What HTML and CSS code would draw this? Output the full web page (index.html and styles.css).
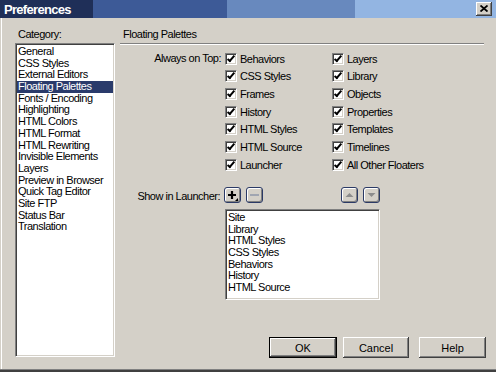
FILE: index.html
```html
<!DOCTYPE html>
<html>
<head>
<meta charset="utf-8">
<link rel="stylesheet" href="styles.css">
</head>
<body>
<div class="window">
  <div class="titlebar">
    <span class="title">Preferences</span>
    <span class="close"><svg width="8" height="7" viewBox="0 0 8 7"><path d="M0.5 0.5 L7.5 6.5 M7.5 0.5 L0.5 6.5" stroke="#000" stroke-width="1.8" fill="none"/></svg></span>
  </div>
  <div class="main">
    <div class="left">
      <div class="label">Category:</div>
      <ul class="list cat">
        <li>General</li>
        <li>CSS Styles</li>
        <li>External Editors</li>
        <li class="sel">Floating Palettes</li>
        <li>Fonts / Encoding</li>
        <li>Highlighting</li>
        <li>HTML Colors</li>
        <li>HTML Format</li>
        <li>HTML Rewriting</li>
        <li>Invisible Elements</li>
        <li>Layers</li>
        <li>Preview in Browser</li>
        <li>Quick Tag Editor</li>
        <li>Site FTP</li>
        <li>Status Bar</li>
        <li>Translation</li>
      </ul>
    </div>
    <div class="right">
      <div class="label heading">Floating Palettes</div>
      <div class="sep"></div>
      <div class="ontop">
        <div class="rowlabel">Always on Top:</div>
        <div class="col">
          <div class="cb"><span class="box"></span>Behaviors</div>
          <div class="cb"><span class="box"></span>CSS Styles</div>
          <div class="cb"><span class="box"></span>Frames</div>
          <div class="cb"><span class="box"></span>History</div>
          <div class="cb"><span class="box"></span>HTML Styles</div>
          <div class="cb"><span class="box"></span>HTML Source</div>
          <div class="cb"><span class="box"></span>Launcher</div>
        </div>
        <div class="col">
          <div class="cb"><span class="box"></span>Layers</div>
          <div class="cb"><span class="box"></span>Library</div>
          <div class="cb"><span class="box"></span>Objects</div>
          <div class="cb"><span class="box"></span>Properties</div>
          <div class="cb"><span class="box"></span>Templates</div>
          <div class="cb"><span class="box"></span>Timelines</div>
          <div class="cb"><span class="box"></span>All Other Floaters</div>
        </div>
      </div>
      <div class="launcher">
        <div class="rowlabel lrow">Show in Launcher:</div>
        <div class="lcol">
          <div class="tools">
            <span class="tbtn"><svg width="15" height="14" viewBox="0 0 15 14"><path d="M3 7 H11 M7 3 V11" stroke="#000" stroke-width="2.2" fill="none"/><path d="M10 13 L13 13 L13 10 Z" fill="#000"/></svg></span>
            <span class="tbtn"><svg width="15" height="14" viewBox="0 0 15 14"><path d="M3 7 H12" stroke="#8a93a8" stroke-width="1.4" fill="none"/></svg></span>
            <span class="spacer"></span>
            <span class="tbtn"><svg width="15" height="14" viewBox="0 0 15 14"><path d="M3.5 9 L7.5 5 L11.5 9 Z" fill="#8c8c8c"/></svg></span>
            <span class="tbtn"><svg width="15" height="14" viewBox="0 0 15 14"><path d="M3.5 5 L7.5 9 L11.5 5 Z" fill="#8c8c8c"/></svg></span>
          </div>
          <ul class="list launch">
            <li>Site</li>
            <li>Library</li>
            <li>HTML Styles</li>
            <li>CSS Styles</li>
            <li>Behaviors</li>
            <li>History</li>
            <li>HTML Source</li>
          </ul>
        </div>
      </div>
      <div class="footer">
        <span class="btn default"><span class="inner">OK</span></span>
        <span class="btn cancel"><span class="inner">Cancel</span></span>
        <span class="btn help"><span class="inner">Help</span></span>
      </div>
    </div>
  </div>
</div>
</body>
</html>
```
FILE: styles.css
```css
html, body {
  margin: 0;
  padding: 0;
}
body {
  width: 496px;
  height: 372px;
  overflow: hidden;
  font-family: "Liberation Sans", Arial, sans-serif;
  font-size: 11px;
  letter-spacing: -0.5px;
  color: #000;
}
.window {
  width: 496px;
  height: 372px;
  box-sizing: border-box;
  background: #d4d0c8;
  border-bottom: 2px solid #404040;
  box-shadow: inset 0 -1px #808080, inset 1px 0 #d4d0c8, inset 2px 0 #ffffff;
  display: flex;
  flex-direction: column;
}
.titlebar {
  height: 18px;
  flex: none;
  display: flex;
  align-items: center;
  padding-left: 4px;
  background: linear-gradient(to right, #1f2f58 0, #1f2f58 93px, #3d5a97 93px, #3d5a97 227px, #6889be 227px, #6889be 355px, #93b5e2 355px);
}
.title {
  color: #fff;
  font-weight: bold;
  font-size: 13px;
  letter-spacing: -0.7px;
}
.close {
  margin-left: auto;
  margin-right: 4px;
  width: 16px;
  height: 14px;
  box-sizing: border-box;
  background: #d4d0c8;
  box-shadow: inset -1px -1px #404040, inset 1px 1px #ffffff, inset -2px -2px #808080;
  display: flex;
  align-items: center;
  justify-content: center;
  padding-bottom: 1px;
}
.close svg {
  display: block;
}
.main {
  flex: 1;
  display: flex;
  padding-top: 10px;
}
.left {
  margin-left: 15px;
  width: 100px;
  display: flex;
  flex-direction: column;
}
.label {
  line-height: 13px;
  height: 13px;
  padding-left: 3px;
  margin-bottom: 2px;
}
.list {
  list-style: none;
  margin: 0;
  box-sizing: border-box;
  background: #fff;
  border: 1px solid;
  border-color: #808080 #ffffff #ffffff #808080;
  box-shadow: inset 1px 1px #404040, inset -1px -1px #d4d0c8;
  overflow: hidden;
}
.list li {
  line-height: 11.7px;
  height: 11.7px;
  white-space: nowrap;
  padding-left: 1px;
}
.cat {
  height: 314px;
  padding: 2px 1px 0 1px;
}
.cat li.sel {
  background: #2a3b6b;
  color: #fff;
}
.right {
  margin-left: 5px;
  width: 366px;
  display: flex;
  flex-direction: column;
  padding-bottom: 12px;
}
.sep {
  width: 364px;
  height: 0;
  border-top: 1px solid #808080;
  border-bottom: 1px solid #ffffff;
}
.ontop {
  display: flex;
  margin-top: 4.7px;
}
.rowlabel {
  width: 105px;
  box-sizing: border-box;
  text-align: right;
  padding-right: 4px;
  height: 17.7px;
  line-height: 17.7px;
  white-space: nowrap;
}
.col {
  width: 107px;
  display: flex;
  flex-direction: column;
}
.cb {
  height: 17.7px;
  display: flex;
  align-items: center;
  white-space: nowrap;
}
.box {
  position: relative;
  width: 12px;
  height: 12px;
  flex: none;
  box-sizing: border-box;
  background: #fff;
  border: 1px solid;
  border-color: #808080 #ffffff #ffffff #808080;
  box-shadow: inset 1px 1px #404040, inset -1px -1px #d4d0c8;
  margin-right: 3px;
}
.box::after {
  content: "";
  position: absolute;
  left: 3px;
  top: 0px;
  width: 2px;
  height: 6px;
  border: solid #000;
  border-width: 0 2px 2px 0;
  transform: rotate(40deg);
}
.launcher {
  display: flex;
  margin-top: 13.4px;
}
.lrow {
  width: 104px;
  height: 16px;
  line-height: 16px;
  padding-top: 1px;
}
.lcol {
  width: 156px;
  display: flex;
  flex-direction: column;
}
.tools {
  display: flex;
  height: 16px;
}
.tbtn {
  width: 17px;
  height: 16px;
  box-sizing: border-box;
  border: 1px solid #2b3a66;
  border-radius: 3px;
  background: #d4d0c8;
  box-shadow: inset 1px 1px #ffffff, inset -1px -1px #808080;
  display: flex;
  align-items: center;
  justify-content: center;
  margin-right: 5px;
}
.tbtn svg {
  display: block;
}
.spacer {
  flex: 1;
}
.tbtn:last-child {
  margin-right: 0;
}
.launch {
  margin-top: 6px;
  margin-left: 1px;
  width: 155px;
  height: 91px;
  padding: 2px 1px 0 1px;
}
.footer {
  margin-top: auto;
  display: flex;
  justify-content: flex-end;
}
.btn {
  height: 21px;
  box-sizing: border-box;
  display: flex;
}
.btn .inner {
  flex: 1;
  display: flex;
  align-items: center;
  justify-content: center;
  background: #d4d0c8;
  box-shadow: inset -1px -1px #404040, inset 1px 1px #ffffff, inset -2px -2px #808080;
  letter-spacing: 0;
}
.default {
  width: 68px;
  border: 1px solid #000;
}
.cancel {
  width: 66px;
  margin-left: 6px;
}
.help {
  width: 67px;
  margin-left: 10px;
}
```
